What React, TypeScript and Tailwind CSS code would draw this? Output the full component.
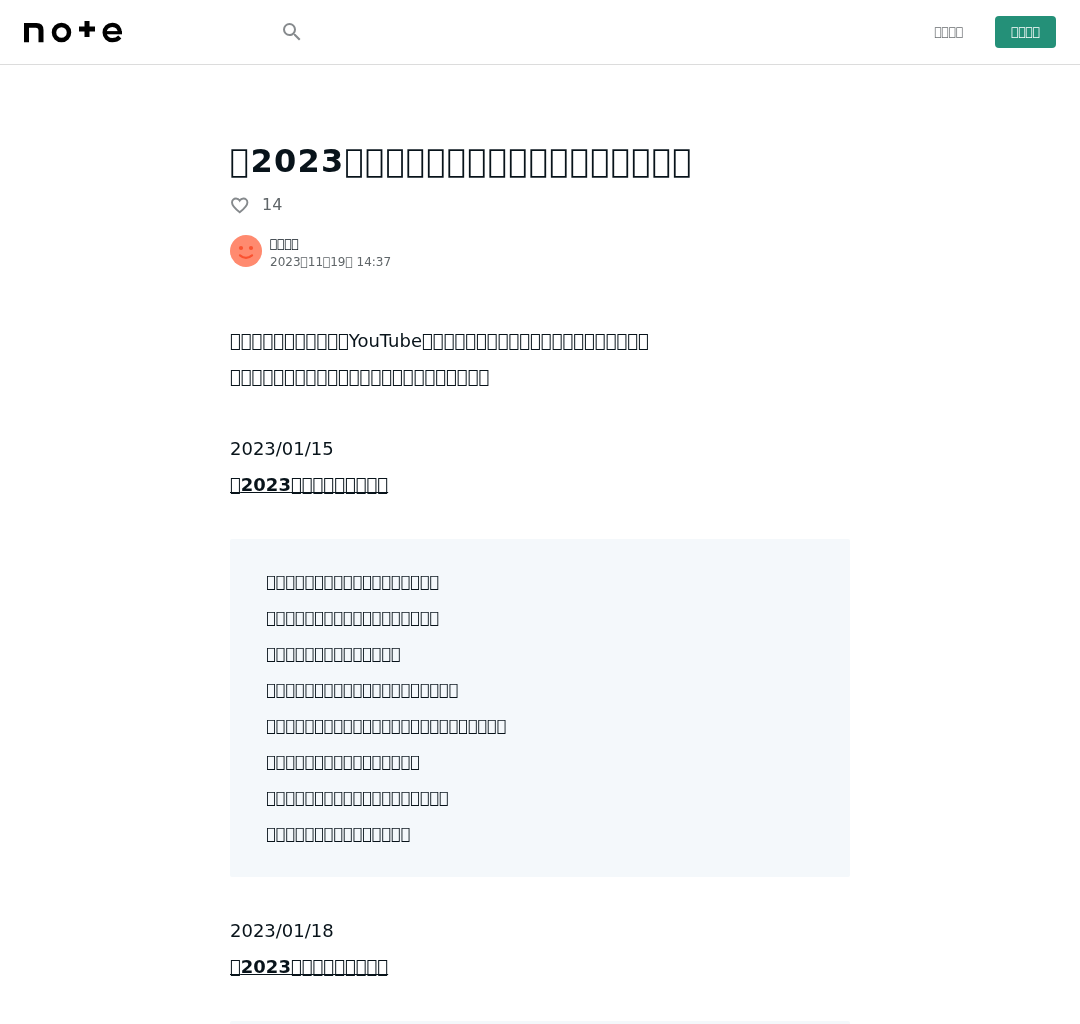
const box = (n: number) => "\u{F0000}".repeat(n);

const quoteLines = [18, 18, 14, 20, 25, 16, 19, 15];

function Logo() {
  return (
    <svg width="100" height="24" viewBox="0 0 100 24" className="-mt-1 block overflow-visible" fill="none" stroke="#000">
      <path d="M0 5H12.500Q19.500 5 19.500 12V24.300H14.500V12.600Q14.500 9.700 11.800 9.700H5V24.300H0Z" fill="#000" stroke="none" />
      <circle cx="37.500" cy="14.500" r="7.500" strokeWidth="4.500" />
      <path d="M63 3V19M55 11H71" strokeWidth="5" />
      <path d="M80.500 14.700H98" strokeWidth="3.200" />
      <path d="M96 16C96 10.200 93 6.800 88.300 6.800A7.700 7.700 0 1 0 88.300 22.200Q92.800 22.200 95.800 19" strokeWidth="4.200" />
    </svg>
  );
}

function Section({ date, children }: { date: string; children?: React.ReactNode }) {
  return (
    <section>
      <p className="mt-9">{date}</p>
      <p>
        <a href="#" className="font-bold underline [text-decoration-skip-ink:none]">
          {box(1)}2023{box(9)}
        </a>
      </p>
      <blockquote className="mt-9 min-h-[338px] rounded-xs bg-[#f4f8fb] px-9 py-[25px] text-base leading-9">
        {children}
      </blockquote>
    </section>
  );
}

export default function App() {
  return (
    <div className="h-screen overflow-hidden font-['DejaVu_Sans',sans-serif] text-[#08131a] will-change-transform">
      <header className="flex h-[65px] items-center border-b border-[#dcdcdc] px-6">
        <Logo />
        <svg width="24" height="24" viewBox="0 0 24 24" className="ml-[156px]" fill="#868a8d">
          <path d="M15.5 14h-.79l-.28-.27A6.471 6.471 0 0 0 16 9.5 6.5 6.5 0 1 0 9.5 16c1.61 0 3.09-.59 4.23-1.57l.27.28v.79l5 4.99L20.49 19l-4.99-5zm-6 0C7.01 14 5 11.99 5 9.5S7.01 5 9.5 5 14 7.01 14 9.5 11.99 14 9.5 14z" />
        </svg>
        <a href="#" className="ml-auto text-xs text-[#6b6f72]">{box(4)}</a>
        <a href="#" className="ml-8 flex h-8 items-center rounded bg-[#249078] px-4 text-xs text-white">{box(4)}</a>
      </header>
      <main className="mx-auto w-[620px] pt-[72px]">
        <h1 className="text-[32px] leading-12 font-bold tracking-[0.04em] whitespace-nowrap">
          {box(1)}2023{box(17)}
        </h1>
        <div className="mt-2 flex h-6 items-center text-base text-[#5f6568]">
          <svg width="20" height="20" viewBox="0 0 20 20" fill="none" stroke="#868a8d" strokeWidth="1.900">
            <path d="M9.700 17.200C5 13.600 2 10.800 2 7.500A4 4 0 0 1 6 3.500C7.600 3.500 8.900 4.300 9.700 5.600C10.500 4.300 11.800 3.500 13.400 3.500A4 4 0 0 1 17.400 7.500C17.400 10.800 14.400 13.600 9.700 17.200Z" />
          </svg>
          <span className="ml-3">14</span>
        </div>
        <div className="mt-[18px] flex h-8 items-center text-xs">
          <svg width="32" height="32" viewBox="0 0 32 32">
            <circle cx="16" cy="16" r="16" fill="#ff8a6f" />
            <circle cx="11" cy="13" r="2.100" fill="#fa5230" />
            <circle cx="21" cy="13" r="2.100" fill="#fa5230" />
            <path d="M10 20.300Q16 25.300 22 20.300" fill="none" stroke="#fa5230" strokeWidth="2.200" strokeLinecap="round" />
          </svg>
          <div className="mt-1 ml-2 leading-[18px]">
            <p>{box(4)}</p>
            <p className="text-[#5f6568]">
              2023{box(1)}11{box(1)}19{box(1)} 14:37
            </p>
          </div>
        </div>
        <article className="mt-14 text-lg leading-9">
          <p>
            {box(11)}YouTube{box(21)}
          </p>
          <p>{box(24)}</p>
          <Section date="2023/01/15">
            {quoteLines.map((n, i) => (
              <p key={i}>{box(n)}</p>
            ))}
          </Section>
          <Section date="2023/01/18" />
        </article>
      </main>
    </div>
  );
}
